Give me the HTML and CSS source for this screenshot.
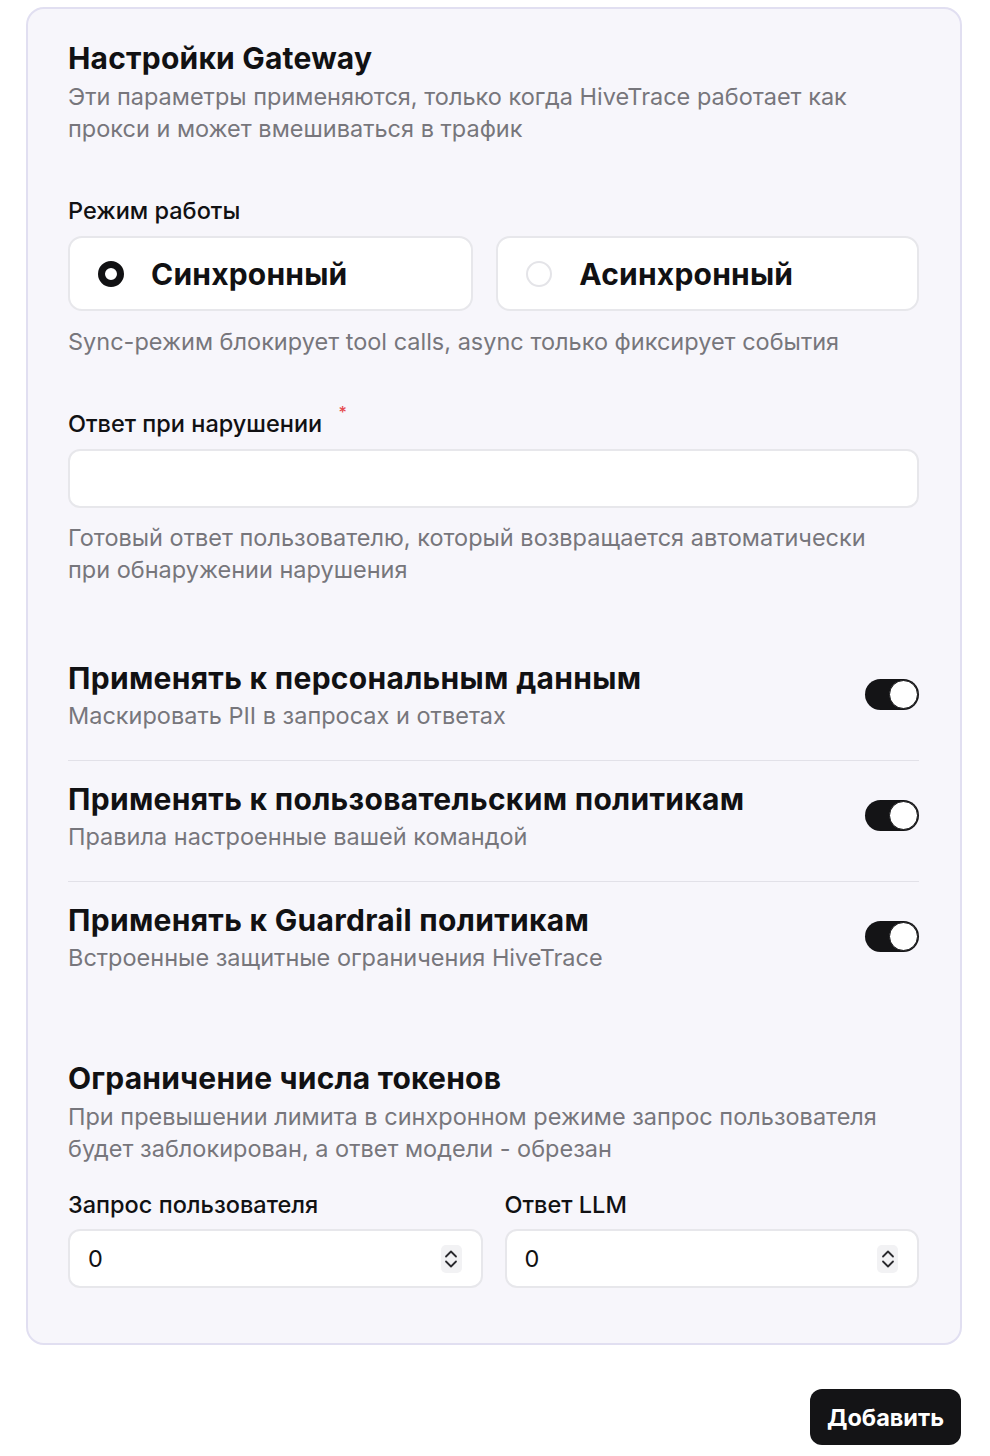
FILE: index.html
```html
<!DOCTYPE html>
<html lang="ru">
<head>
<meta charset="utf-8">
<title>Настройки Gateway</title>
<link rel="stylesheet" href="styles.css">
</head>
<body>
<div class="panel">
  <h2 class="title">Настройки Gateway</h2>
  <p class="desc">Эти параметры применяются, только когда HiveTrace работает как прокси и может вмешиваться в трафик</p>

  <div class="field field-mode">
    <div class="label">Режим работы</div>
    <div class="radios">
      <div class="radio-card">
        <span class="radio radio-on"></span>
        <span class="radio-text">Синхронный</span>
      </div>
      <div class="radio-card">
        <span class="radio"></span>
        <span class="radio-text">Асинхронный</span>
      </div>
    </div>
    <p class="hint">Sync-режим блокирует tool calls, async только фиксирует события</p>
  </div>

  <div class="field field-answer">
    <div class="label">Ответ при нарушении <span class="req">*</span></div>
    <div class="input"></div>
    <p class="hint">Готовый ответ пользователю, который возвращается автоматически при обнаружении нарушения</p>
  </div>

  <div class="toggles">
    <div class="toggle-row">
      <div class="toggle-info">
        <div class="toggle-title">Применять к персональным данным</div>
        <div class="toggle-sub">Маскировать PII в запросах и ответах</div>
      </div>
      <span class="switch"><span class="knob"></span></span>
    </div>
    <div class="toggle-row">
      <div class="toggle-info">
        <div class="toggle-title">Применять к пользовательским политикам</div>
        <div class="toggle-sub">Правила настроенные вашей командой</div>
      </div>
      <span class="switch"><span class="knob"></span></span>
    </div>
    <div class="toggle-row">
      <div class="toggle-info">
        <div class="toggle-title">Применять к Guardrail политикам</div>
        <div class="toggle-sub">Встроенные защитные ограничения HiveTrace</div>
      </div>
      <span class="switch"><span class="knob"></span></span>
    </div>
  </div>

  <h3 class="title section-title">Ограничение числа токенов</h3>
  <p class="desc">При превышении лимита в синхронном режиме запрос пользователя будет заблокирован, а ответ модели - обрезан</p>

  <div class="numbers">
    <div class="num-field">
      <div class="label">Запрос пользователя</div>
      <div class="input num-input">
        <span class="num-value">0</span>
        <span class="spinner">
          <svg width="14" height="24" viewBox="0 0 14 24" fill="none" stroke="#2a2a2e" stroke-width="1.8" stroke-linecap="round" stroke-linejoin="round"><path d="M2 9.5 L7 4.5 L12 9.5"/><path d="M2 14.5 L7 19.5 L12 14.5"/></svg>
        </span>
      </div>
    </div>
    <div class="num-field">
      <div class="label">Ответ LLM</div>
      <div class="input num-input">
        <span class="num-value">0</span>
        <span class="spinner">
          <svg width="14" height="24" viewBox="0 0 14 24" fill="none" stroke="#2a2a2e" stroke-width="1.8" stroke-linecap="round" stroke-linejoin="round"><path d="M2 9.5 L7 4.5 L12 9.5"/><path d="M2 14.5 L7 19.5 L12 14.5"/></svg>
        </span>
      </div>
    </div>
  </div>
</div>

<div class="actions">
  <button class="btn-primary" type="button">Добавить</button>
</div>
</body>
</html>
```

FILE: styles.css
```css
* { box-sizing: border-box; }

body {
  margin: 0;
  background: #ffffff;
  font-family: Inter, "Noto Sans", "Liberation Sans", sans-serif;
  color: #111113;
}

.panel {
  margin: 7px 28px 0 26px;
  border: 2px solid #e1dff1;
  border-radius: 18px;
  background: #f7f6fb;
  padding: 31px 41px 55px 40px;
}

.title {
  margin: 0;
  font-size: 30px;
  line-height: 36px;
  font-weight: 700;
  letter-spacing: 0.2px;
  color: #111113;
}

.desc {
  margin: 5px 0 0;
  font-size: 23.5px;
  line-height: 32px;
  color: #77767c;
  max-width: 815px;
}

.label {
  font-size: 23.5px;
  line-height: 28px;
  font-weight: 500;
  color: #111113;
}

.req {
  position: relative;
  top: 2px;
  color: #e5484d;
  font-size: 16px;
  line-height: 0;
  vertical-align: top;
  margin-left: 10px;
}

.field-mode { margin-top: 52px; }
.field-answer { margin-top: 52px; }

.radios {
  display: flex;
  gap: 23px;
  margin-top: 11px;
}

.radio-card {
  flex: 1 1 auto;
  height: 75px;
  display: flex;
  align-items: center;
  gap: 27px;
  padding: 0 28px;
  background: #ffffff;
  border: 2px solid #e7e7eb;
  border-radius: 14px;
}

.radio {
  width: 26px;
  height: 26px;
  border-radius: 50%;
  border: 2px solid #e4e4e8;
  background: #fff;
  flex: none;
}

.radio-on {
  border: 7px solid #111113;
}

.radio-text {
  font-size: 30px;
  font-weight: 700;
  line-height: 36px;
  letter-spacing: 0.2px;
}

.hint {
  margin: 15px 0 0;
  font-size: 23.5px;
  line-height: 32px;
  color: #77767c;
}

.field-answer .input { margin-top: 11px; }
.field-answer .hint { margin-top: 14px; max-width: 830px; }

.input {
  height: 59px;
  background: #ffffff;
  border: 2px solid #e7e7eb;
  border-radius: 12px;
}

.toggles { margin-top: 54px; }

.toggle-row {
  display: flex;
  align-items: center;
  justify-content: space-between;
  padding: 20px 0 28px;
  border-bottom: 1px solid #e2e1e8;
}

.toggle-row:last-child { border-bottom: none; }

.toggle-title {
  font-size: 30px;
  line-height: 36px;
  font-weight: 700;
  letter-spacing: 0.3px;
}

.toggle-sub {
  margin-top: 4px;
  font-size: 23.5px;
  line-height: 32px;
  color: #77767c;
}

.switch {
  width: 54px;
  height: 31px;
  border-radius: 16px;
  background: #141416;
  display: flex;
  align-items: center;
  justify-content: flex-end;
  padding: 1px;
  flex: none;
  margin-top: -4px;
}

.knob {
  width: 29px;
  height: 29px;
  border-radius: 50%;
  background: #ffffff;
  border: 1.5px solid #141416;
}

.section-title { margin-top: 58px; }

.numbers {
  display: grid;
  grid-template-columns: 1fr 1fr;
  gap: 22px;
  margin-top: 26px;
}

.num-input {
  margin-top: 10px;
  display: flex;
  align-items: center;
  justify-content: space-between;
  padding: 0 19px 0 18px;
}

.num-value {
  font-size: 23.5px;
  line-height: 28px;
  color: #111113;
}

.spinner {
  width: 21px;
  height: 28px;
  border-radius: 5px;
  background: #f2f2f4;
  display: flex;
  align-items: center;
  justify-content: center;
}

.actions {
  display: flex;
  justify-content: flex-end;
  padding: 44px 29px 0 0;
}

.btn-primary {
  height: 56px;
  padding: 0 17px;
  border: none;
  border-radius: 12px;
  background: #141416;
  color: #ffffff;
  font-family: Inter, "Noto Sans", "Liberation Sans", sans-serif;
  font-size: 23.5px;
  font-weight: 700;
}
```
